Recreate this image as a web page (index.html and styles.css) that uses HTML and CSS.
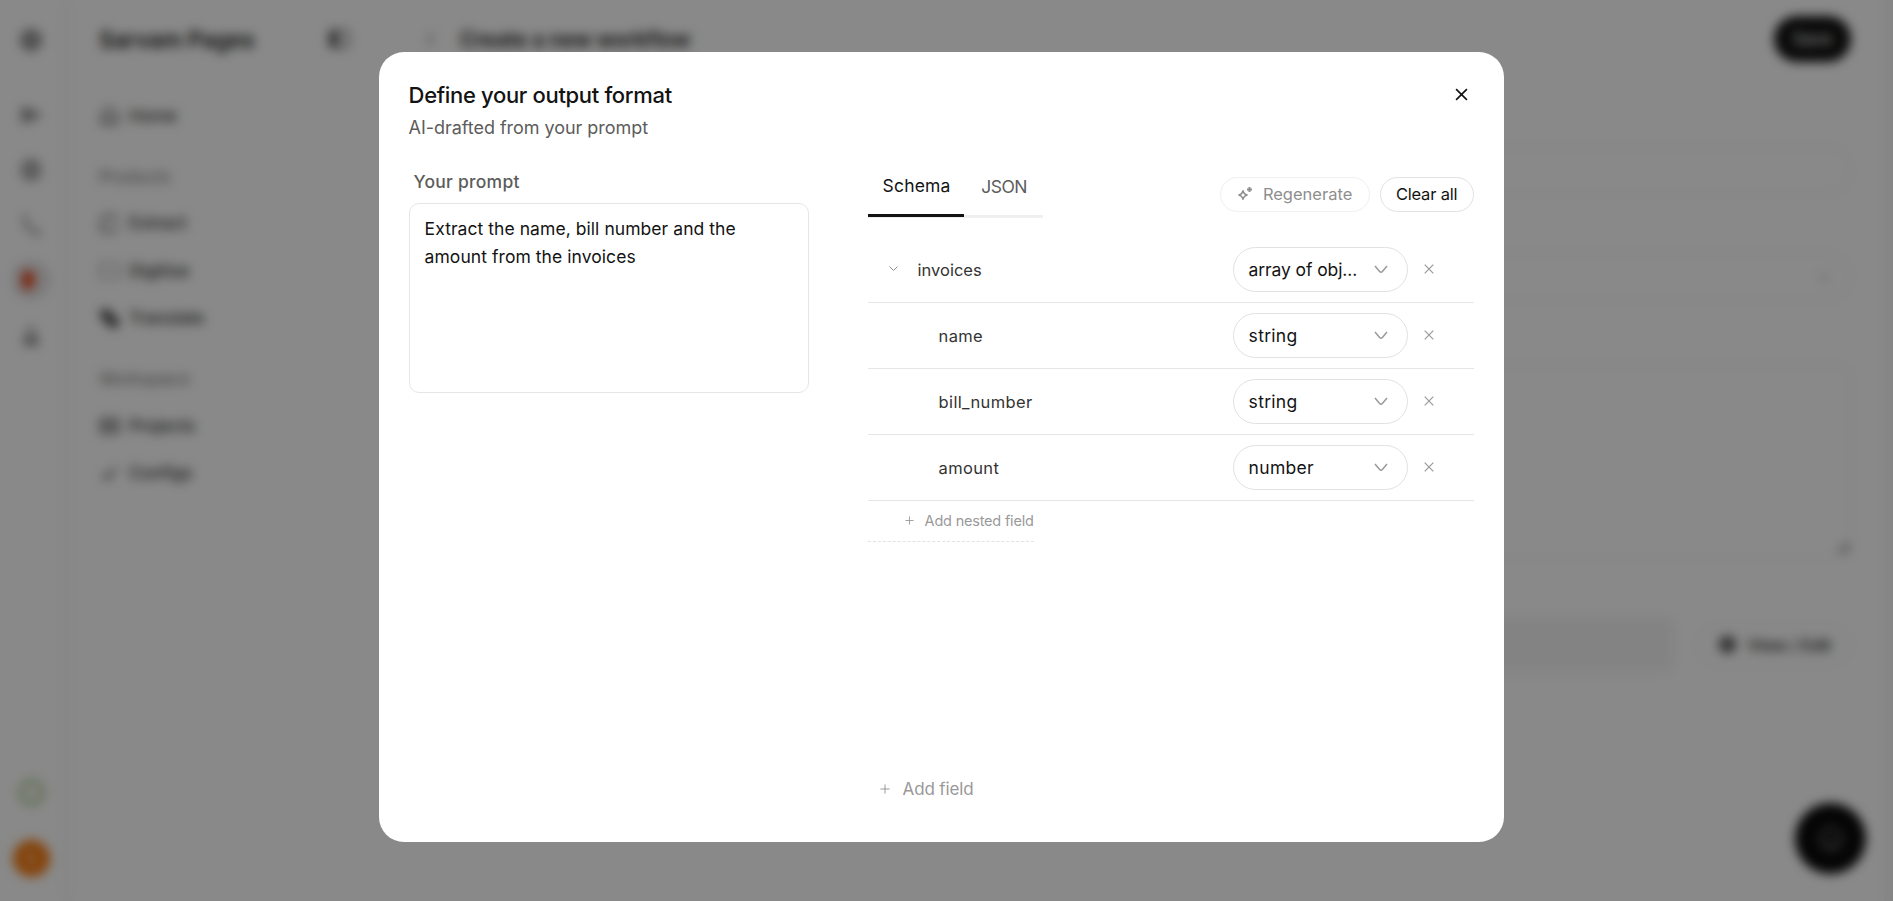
FILE: index.html
```html
<!DOCTYPE html>
<html lang="en">
  <head>
    <meta charset="utf-8">
    <title>Sarvam Pages</title>
    <link rel="stylesheet" href="styles.css">
  </head>

  <body>
    <div class="app">
      <nav class="rail">
        <svg class="rail-icon logo" viewBox="0 0 24 24"><circle cx="12" cy="12" r="9"/><circle cx="12" cy="12" r="4"/></svg>
        <svg class="rail-icon" viewBox="0 0 24 24"><path d="M4 4v16M8 5v14M12 6v12M16 8v8M20 10v4"/></svg>
        <svg class="rail-icon" viewBox="0 0 24 24"><circle cx="12" cy="12" r="9"/><path d="M12 3v18M7 12h10"/></svg>
        <svg class="rail-icon thin" viewBox="0 0 24 24"><path d="M3 4h4v7c0 4 3 7 7 7h6M17 21h5"/></svg>
        <span class="rail-active"><svg viewBox="0 0 24 24"><path d="M3 3h11v18H3z" fill="#e0431f"/><path d="M14 6l7 5-7 5z" fill="#f2a08c"/></svg></span>
        <svg class="rail-icon thin" viewBox="0 0 24 24"><path d="M8 4h8M7 11h10v8H7zM4 20h16M9 15h6"/></svg>
        <span class="credits"></span>
        <span class="avatar">S</span>
      </nav>

      <aside class="sidebar">
        <div class="brand">
          <span>Sarvam Pages</span>
          <svg viewBox="0 0 24 24"><rect x="3" y="4" width="18" height="16" rx="3"/><path d="M4 5h6v14H4z" fill="#555"/></svg>
        </div>
        <a class="nav-item"><svg viewBox="0 0 24 24"><path d="M3 11l9-8 9 8v10H3zM8 16h8"/></svg>Home</a>
        <div class="nav-label">Products</div>
        <a class="nav-item"><svg viewBox="0 0 24 24"><path d="M20 9V5l-3-2H7L3 7v14h16M20 14v5"/></svg>Extract</a>
        <a class="nav-item"><svg viewBox="0 0 24 24" class="dashed"><path d="M8 3H3v18h5M16 3h5v18h-5"/></svg>Digitise</a>
        <a class="nav-item"><svg viewBox="0 0 24 24"><path d="M3 3h10v10H3zM11 11h10v10H11z" fill="#555"/></svg>Translate</a>
        <div class="nav-label">Workspace</div>
        <a class="nav-item"><svg viewBox="0 0 24 24"><path d="M2 5h20v15H2zM2 12h20M12 5v15"/></svg>Projects</a>
        <a class="nav-item"><svg viewBox="0 0 24 24"><path d="M4 13l5 6L20 5M9 12l4 3"/></svg>Configs</a>
      </aside>

      <main class="main">
        <header class="topbar">
          <svg viewBox="0 0 24 24"><path d="M15 5l-7 7 7 7"/></svg>
          <h1>Create a new workflow</h1>
          <button class="save">Save</button>
        </header>
        <div class="field name-field"></div>
        <div class="field select-field"><svg viewBox="0 0 24 24"><path d="M5 9l7 7 7-7"/></svg></div>
        <div class="field text-field"><svg viewBox="0 0 24 24"><path d="M4 22L22 4M14 22l8-8"/></svg></div>
        <div class="format-row">
          <div class="format-box"></div>
          <button class="view-edit"><svg viewBox="0 0 24 24"><circle cx="12" cy="12" r="8"/><circle cx="12" cy="12" r="3"/></svg>View / Edit</button>
        </div>
      </main>
      <button class="chat"><svg viewBox="0 0 24 24"><circle cx="12" cy="12" r="9"/><path d="M8 14c2 3 6 3 8 0"/></svg></button>
    </div>

    <div class="overlay">
      <div class="modal">
        <header class="modal-header">
          <div>
            <h2>Define your output format</h2>
            <p>AI-drafted from your prompt</p>
          </div>
          <svg class="close" viewBox="0 0 12 12"><path d="M1 1l10 10M11 1L1 11"/></svg>
        </header>

        <div class="modal-body">
          <section class="prompt">
            <label>Your prompt</label>
            <div class="prompt-box">Extract the name, bill number and the<br>amount from the invoices</div>
          </section>

          <section class="schema">
            <div class="schema-bar">
              <div class="tabs">
                <button class="tab active">Schema</button>
                <button class="tab">JSON</button>
              </div>
              <div class="actions">
                <button class="pill regenerate">
                  <svg viewBox="0 0 16 16"><path d="M6 4.500c.5 2.900 1.600 4 4.500 4.500-2.900.5-4 1.600-4.500 4.500-.5-2.900-1.600-4-4.500-4.500 2.900-.5 4-1.600 4.500-4.500z"/><path class="spark" d="M12.500 1v5M10 3.500h5"/></svg>
                  Regenerate
                </button>
                <button class="pill clear">Clear all</button>
              </div>
            </div>

            <div class="rows">
              <div class="row parent">
                <svg class="toggle" viewBox="0 0 9 6"><path d="M.5.5l4 4 4-4"/></svg>
                <span class="key">invoices</span>
                <div class="select">array of obj...<svg viewBox="0 0 14 9"><path d="M1 1l4.600 5.500q1.400 1.300 2.800 0L13 1"/></svg></div>
                <svg class="remove" viewBox="0 0 10 10"><path d="M.7.7l8.600 8.600M9.300.7L.7 9.300"/></svg>
              </div>
              <div class="row">
                <span class="key">name</span>
                <div class="select">string<svg viewBox="0 0 14 9"><path d="M1 1l4.600 5.500q1.400 1.300 2.800 0L13 1"/></svg></div>
                <svg class="remove" viewBox="0 0 10 10"><path d="M.7.7l8.600 8.600M9.300.7L.7 9.300"/></svg>
              </div>
              <div class="row">
                <span class="key">bill_number</span>
                <div class="select">string<svg viewBox="0 0 14 9"><path d="M1 1l4.600 5.500q1.400 1.300 2.800 0L13 1"/></svg></div>
                <svg class="remove" viewBox="0 0 10 10"><path d="M.7.7l8.600 8.600M9.300.7L.7 9.300"/></svg>
              </div>
              <div class="row">
                <span class="key">amount</span>
                <div class="select">number<svg viewBox="0 0 14 9"><path d="M1 1l4.600 5.500q1.400 1.300 2.800 0L13 1"/></svg></div>
                <svg class="remove" viewBox="0 0 10 10"><path d="M.7.7l8.600 8.600M9.300.7L.7 9.300"/></svg>
              </div>
              <button class="add-nested"><svg viewBox="0 0 10 10"><path d="M5 .5v9M.5 5h9"/></svg>Add nested field</button>
            </div>
            <button class="add-field"><svg viewBox="0 0 10 10"><path d="M5 .5v9M.5 5h9"/></svg>Add field</button>
          </section>
        </div>
      </div>
    </div>
  </body>
</html>
```
FILE: styles.css
```css
* {
  box-sizing: border-box;
}

body {
  margin: 0;
  height: 901px;
  overflow: hidden;
  background: #fdfdfd;
  font-family: Inter, "Open Sans", sans-serif;
  color: #131313;
}

h1,
h2,
p {
  margin: 0;
}

button {
  font-family: inherit;
  color: inherit;
  background: none;
  border: none;
  padding: 0;
}

svg {
  display: block;
  flex: none;
  fill: none;
  stroke: currentColor;
}

/* page behind the dialog */
.app {
  display: flex;
  height: 901px;
  border-right: 9px solid #f6f6f6;
}

.app svg {
  stroke-width: 2;
}

.rail {
  display: flex;
  flex-direction: column;
  align-items: center;
  width: 62px;
  padding: 28px 0 24px;
}

.rail-icon {
  width: 24px;
  height: 24px;
  margin-bottom: 31px;
  color: #333;
}

.rail .logo {
  margin-bottom: 51px;
  stroke-width: 2.500;
}

.rail .thin {
  color: #555;
  margin-bottom: 25px;
}

.rail-active {
  display: grid;
  place-items: center;
  width: 40px;
  height: 40px;
  margin: -2px 0 24px;
  border-radius: 50%;
  background: #e4e4e4;
}

.rail-active svg {
  width: 24px;
  stroke: none;
}

.credits {
  width: 27px;
  height: 27px;
  margin-top: auto;
  margin-bottom: 34px;
  border: 6px solid #bcd5a6;
  border-radius: 50%;
}

.avatar {
  width: 37px;
  height: 37px;
  border-radius: 50%;
  background: #f47a11;
  color: #fff;
  font-size: 14px;
  line-height: 37px;
  text-align: center;
}

.sidebar {
  width: 318px;
  padding: 21px 0 0 28px;
  border-left: 9px solid #f8f8f8;
}

.brand {
  display: flex;
  align-items: center;
  justify-content: space-between;
  height: 36px;
  margin: 0 29px 35px 0;
  font-size: 22.500px;
  font-weight: 600;
}

.brand svg {
  width: 24px;
  color: #555;
}

.nav-item {
  display: flex;
  align-items: center;
  gap: 9px;
  height: 47.500px;
  color: #333;
  font-size: 17px;
  font-weight: 500;
}

.nav-item svg {
  width: 21px;
}

.nav-item .dashed {
  stroke-dasharray: 3 2;
}

.nav-label {
  height: 60px;
  padding-top: 27px;
  font-size: 17px;
  color: #777;
}

.main {
  flex: 1;
  padding: 16px 33px 0 41px;
}

.topbar {
  display: flex;
  align-items: center;
  height: 46px;
}

.topbar svg {
  width: 20px;
  color: #777;
}

.topbar h1 {
  flex: 1;
  margin-left: 19px;
  font-size: 20.800px;
  font-weight: 600;
}

.save {
  width: 77px;
  height: 46px;
  border-radius: 23px;
  background: #131313;
  color: #fff;
  font-size: 17px;
}

.field {
  border: 1px solid #ebebeb;
}

.name-field {
  height: 48px;
  margin-top: 84px;
  border-radius: 24px;
}

.select-field {
  display: flex;
  align-items: center;
  justify-content: flex-end;
  height: 48px;
  margin-top: 59px;
  padding-right: 18px;
  border-radius: 24px;
}

.select-field svg {
  width: 16px;
  color: #888;
}

.text-field {
  display: flex;
  align-items: flex-end;
  justify-content: flex-end;
  height: 194px;
  margin-top: 64px;
  border-radius: 12px;
}

.text-field svg {
  width: 14px;
  margin: 0 0 4px;
  color: #555;
  stroke-width: 3;
}

.format-row {
  display: flex;
  align-items: center;
  justify-content: space-between;
  margin-top: 57px;
}

.format-box {
  width: 1254px;
  height: 57px;
  border-radius: 12px;
  background: #f3f3f3;
}

.view-edit {
  display: flex;
  align-items: center;
  justify-content: center;
  gap: 10px;
  width: 154px;
  height: 38px;
  border: 1px solid #ebebeb;
  border-radius: 19px;
  font-size: 16.500px;
  font-weight: 500;
}

.view-edit svg {
  width: 21px;
  stroke-width: 3;
}

.chat {
  position: fixed;
  right: 27px;
  bottom: 27px;
  display: grid;
  place-items: center;
  width: 71px;
  height: 71px;
  border-radius: 50%;
  background: #0a0a0a;
  color: #777;
}

.chat svg {
  width: 28px;
}

/* dialog */
.overlay {
  position: fixed;
  inset: 0;
  padding: 51.600px 0 0 378.600px;
  background: rgba(0, 0, 0, 0.46);
  backdrop-filter: blur(5.500px);
}

.modal {
  display: flex;
  flex-direction: column;
  width: 1125px;
  height: 790.500px;
  padding: 30px;
  border-radius: 25px;
  background: #fff;
}

.modal-header {
  display: flex;
  justify-content: space-between;
}

.modal-header h2 {
  margin-top: -1px;
  font-size: 22px;
  font-weight: 500;
  line-height: 28px;
  letter-spacing: -0.330px;
}

.modal-header p {
  margin-top: 6px;
  font-size: 18px;
  line-height: 26px;
  letter-spacing: -0.040px;
  color: #5c5c5c;
}

.close {
  width: 13px;
  height: 13px;
  margin: 6px 6px 0 0;
  stroke-width: 1.500;
}

.modal-body {
  display: grid;
  grid-template-columns: 400px 606px;
  justify-content: space-between;
  flex: 1;
}

.prompt {
  padding-top: 27px;
}

.prompt label {
  display: block;
  padding-left: 5px;
  font-size: 17.500px;
  font-weight: 500;
  line-height: 28px;
  letter-spacing: 0.250px;
  color: #5c5c5c;
}

.prompt-box {
  height: 190px;
  margin-top: 7px;
  padding: 11px 15px;
  border: 1px solid #e6e6e6;
  border-radius: 10px;
  font-size: 17.500px;
  line-height: 28px;
  letter-spacing: 0.060px;
}

.schema {
  display: flex;
  flex-direction: column;
  padding-top: 24px;
}

.schema-bar {
  display: flex;
  align-items: flex-start;
  justify-content: space-between;
}

.tabs {
  display: flex;
  height: 53px;
  border-bottom: 3px solid #efefef;
}

.tab {
  width: 79px;
  height: 52px;
  padding: 0 0 8px 2px;
  font-size: 17.500px;
  letter-spacing: -0.500px;
  color: #5c5c5c;
}

.tab.active {
  width: 96px;
  border-bottom: 3px solid #131313;
  letter-spacing: 0.200px;
  color: #131313;
}

.actions {
  display: flex;
  gap: 10px;
  margin-top: 12px;
}

.pill {
  display: flex;
  align-items: center;
  justify-content: center;
  width: 94px;
  height: 35px;
  border: 1px solid #e2e2e2;
  border-radius: 18px;
  font-size: 16.500px;
}

.clear {
  letter-spacing: -0.200px;
}

.regenerate {
  width: 150px;
  gap: 10px;
  border-color: #f0f0f0;
  color: #8e8e8e;
}

.regenerate svg {
  width: 16px;
  stroke-width: 1.500;
}

.regenerate .spark {
  stroke-width: 2;
}

.rows {
  flex: 1;
  margin-top: 19px;
}

.row {
  display: flex;
  align-items: center;
  height: 66px;
  padding-left: 71px;
  border-bottom: 1px solid #e6e6e6;
}

.row.parent {
  padding-left: 21px;
}

.toggle {
  width: 9px;
  margin-right: 20px;
  color: #8e8e8e;
}

.key {
  flex: 1;
  padding-top: 2px;
  font-size: 16.500px;
  letter-spacing: 0.350px;
  color: #333;
}

.parent .key {
  letter-spacing: 0;
}

.select {
  display: flex;
  align-items: center;
  justify-content: space-between;
  width: 175px;
  height: 45px;
  padding: 0 19px 0 15px;
  border: 1px solid #e2e2e2;
  border-radius: 23px;
  font-size: 17.500px;
  letter-spacing: 0.300px;
}

.parent .select {
  letter-spacing: -0.100px;
}

.select svg {
  width: 14px;
  color: #999;
  stroke-width: 1.500;
}

.remove {
  width: 10px;
  margin: 0 40px 0 16px;
  color: #999;
  stroke-width: 1.200;
}

.add-nested {
  display: flex;
  align-items: center;
  height: 41px;
  padding: 0 0 1px 37px;
  border-bottom: 1px dashed #e2e2e2;
  font-size: 14.500px;
  letter-spacing: -0.200px;
  color: #999;
}

.add-nested svg {
  width: 9px;
  margin-right: 11px;
}

.add-field {
  display: flex;
  align-items: center;
  height: 46px;
  padding: 0 0 1px 12px;
  font-size: 17px;
  letter-spacing: -0.150px;
  color: #999;
}

.add-field svg {
  width: 10px;
  margin-right: 13px;
}
```
